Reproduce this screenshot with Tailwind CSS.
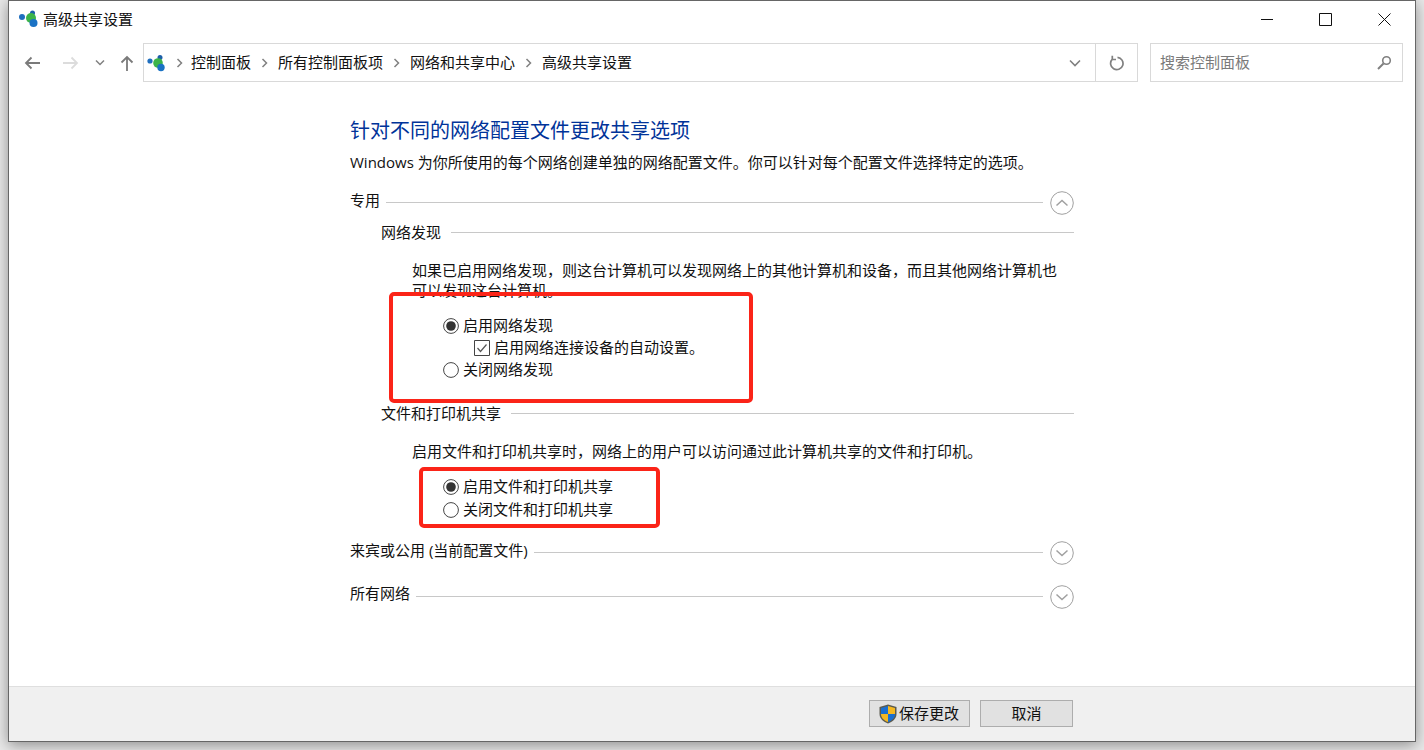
<!DOCTYPE html>
<html lang="zh-CN">
<head>
	<meta charset="UTF-8" />
	<title>高级共享设置</title>
	<script src="https://cdn.jsdelivr.net/npm/@tailwindcss/browser@4"></script>
</head>
<body class="bg-[#e9e9e9] h-[750px] overflow-hidden font-['Open_Sans','Noto_Sans_CJK_SC',sans-serif] text-[15px] leading-[20px] text-[#111]">
	<div class="relative ml-2 w-[1408px] h-[742px] flex flex-col bg-white border border-[#666] shadow-[0_3px_14px_rgba(0,0,0,0.4)]">

		<!-- title bar -->
		<div class="h-[36px] flex items-center shrink-0">
			<svg class="ml-[9px] w-[22px] h-[20px]" viewBox="0 0 22 20">
				<circle cx="4" cy="8" r="3" fill="#1f6fbf"/>
				<circle cx="14.5" cy="4" r="2.5" fill="#1c5fa8"/>
				<circle cx="13" cy="9" r="5" fill="#3cb44a"/>
				<circle cx="15.5" cy="14" r="4" fill="#1a72c4"/>
			</svg>
			<span class="ml-[3px]">高级共享设置</span>
			<div class="ml-auto mr-[24px] flex items-center gap-[46px]">
				<svg class="w-[12px] h-[12px]" viewBox="0 0 12 12"><path d="M0 6.5H12" stroke="#111" fill="none"/></svg>
				<svg class="w-[13px] h-[13px]" viewBox="0 0 13 13"><path d="M.5.5H12.5V12.5H.5Z" stroke="#111" fill="none"/></svg>
				<svg class="w-[13px] h-[13px]" viewBox="0 0 13 13"><path d="M.5.5L12.5 12.5M12.5.5L.5 12.5" stroke="#111" fill="none"/></svg>
			</div>
		</div>

		<!-- nav row -->
		<div class="mt-[6px] h-[39px] flex shrink-0">
			<div class="w-[134px] flex items-center">
				<svg class="ml-[15px] w-[17px] h-[14px]" viewBox="0 0 17 14"><path d="M16 7H2M7.5 1.5L2 7l5.5 5.500" stroke="#7a7a7a" stroke-width="1.800" fill="none"/></svg>
				<svg class="ml-[21px] w-[17px] h-[14px]" viewBox="0 0 17 14"><path d="M1 7H15M9.500 1.500L15 7l-5.500 5.500" stroke="#dcdcdc" stroke-width="1.800" fill="none"/></svg>
				<svg class="ml-[16px] w-[10px] h-[7px]" viewBox="0 0 10 7"><path d="M1 1.500L5 5.500L9 1.500" stroke="#808080" stroke-width="1.500" fill="none"/></svg>
				<svg class="ml-[15px] mt-[2px] w-[14px] h-[17px]" viewBox="0 0 14 17"><path d="M7 16V2M1.500 7.500L7 2l5.500 5.500" stroke="#7a7a7a" stroke-width="1.800" fill="none"/></svg>
			</div>
			<div class="w-[995px] flex items-center border border-[#d9d9d9]">
				<svg class="ml-[1px] w-[22px] h-[20px]" viewBox="0 0 22 20">
					<circle cx="5" cy="8" r="2.600" fill="#1f6fbf"/>
					<circle cx="15" cy="4.500" r="2.500" fill="#1c5fa8"/>
					<circle cx="13" cy="10" r="4.800" fill="#3cb44a"/>
					<circle cx="16" cy="14.500" r="3.700" fill="#1a72c4"/>
				</svg>
				<svg class="ml-[9px] w-[7px] h-[10px]" viewBox="0 0 7 10"><path d="M1.500 1L5.500 5L1.500 9" stroke="#808080" stroke-width="1.500" fill="none"/></svg>
				<span class="ml-[8px] mb-[2px]">控制面板</span>
				<svg class="ml-[10px] w-[7px] h-[10px]" viewBox="0 0 7 10"><path d="M1.500 1L5.500 5L1.500 9" stroke="#808080" stroke-width="1.500" fill="none"/></svg>
				<span class="ml-[10px] mb-[2px]">所有控制面板项</span>
				<svg class="ml-[10px] w-[7px] h-[10px]" viewBox="0 0 7 10"><path d="M1.500 1L5.500 5L1.500 9" stroke="#808080" stroke-width="1.500" fill="none"/></svg>
				<span class="ml-[10px] mb-[2px]">网络和共享中心</span>
				<svg class="ml-[10px] w-[7px] h-[10px]" viewBox="0 0 7 10"><path d="M1.500 1L5.500 5L1.500 9" stroke="#808080" stroke-width="1.500" fill="none"/></svg>
				<span class="ml-[10px] mb-[2px]">高级共享设置</span>
				<svg class="ml-auto mr-[14px] w-[12px] h-[8px]" viewBox="0 0 12 8"><path d="M1 1.500L6 6.500L11 1.500" stroke="#808080" stroke-width="1.600" fill="none"/></svg>
				<div class="w-[42px] h-full border-l border-[#d9d9d9] flex items-center justify-center">
					<svg class="w-[16px] h-[16px]" viewBox="0 0 16 16"><path d="M8.500 2.300A6.200 6.200 0 1 1 3.300 4.200M3.300 .8V4.500H7" stroke="#808080" stroke-width="1.700" fill="none"/></svg>
				</div>
			</div>
			<div class="ml-[12px] w-[253px] flex items-center justify-between border border-[#d9d9d9] pl-[9px] pr-[10px] text-[#7a7a7a]">
				<span class="mb-[2px]">搜索控制面板</span>
				<svg class="w-[15px] h-[15px]" viewBox="0 0 15 15"><circle cx="9.500" cy="5.500" r="3.800" stroke="#808080" stroke-width="1.600" fill="none"/><path d="M6.500 8.500L1 14" stroke="#808080" stroke-width="2" fill="none"/></svg>
			</div>
		</div>

		<!-- main -->
		<div class="flex-1 pl-[341px] pt-[34px]">
			<div class="w-[724px]">
				<h1 class="mt-[1px] text-[20px] leading-[28px] text-[#003399]">针对不同的网络配置文件更改共享选项</h1>
				<p class="mt-[7px]">Windows 为你所使用的每个网络创建单独的网络配置文件。你可以针对每个配置文件选择特定的选项。</p>

				<div class="mt-[19px] h-[24px] flex items-center">
					<span class="mb-[6px]">专用</span>
					<div class="ml-[6px] mb-[1px] flex-1 h-px bg-[#c8c8c8]"></div>
					<svg class="ml-[7px] w-[24px] h-[24px]" viewBox="0 0 24 24"><circle cx="12" cy="12" r="11.300" stroke="#a0a0a0" fill="white"/><path d="M6.500 14.500L12 9.500L17.500 14.500" stroke="#a0a0a0" stroke-width="1.500" fill="none"/></svg>
				</div>

				<div class="ml-[31px]">
					<div class="mt-[7px] flex items-center">
						<span>网络发现</span>
						<div class="ml-[10px] flex-1 h-px bg-[#c8c8c8]"></div>
					</div>
					<p class="mt-[18px] ml-[31px] w-[650px]">如果已启用网络发现，则这台计算机可以发现网络上的其他计算机和设备，而且其他网络计算机也可以发现这台计算机。</p>
					<div class="mt-[16px] ml-[62px] h-[20px] flex items-center">
						<svg class="w-[16px] h-[16px]" viewBox="0 0 16 16"><circle cx="8" cy="8" r="7.400" stroke="#444" fill="white"/><circle cx="8" cy="8" r="4.800" fill="#333"/></svg>
						<span class="ml-[4px] mb-[2px]">启用网络发现</span>
					</div>
					<div class="mt-[2px] ml-[93px] h-[20px] flex items-center">
						<svg class="w-[16px] h-[16px]" viewBox="0 0 16 16"><path d="M.5.5H15.500V15.500H.5Z" stroke="#444" fill="white"/><path d="M3.500 8L6.500 11.500L12.500 4.500" stroke="#555" stroke-width="1.200" fill="none"/></svg>
						<span class="ml-[4px] mb-[2px]">启用网络连接设备的自动设置。</span>
					</div>
					<div class="mt-[2px] ml-[62px] h-[20px] flex items-center">
						<svg class="w-[16px] h-[16px]" viewBox="0 0 16 16"><circle cx="8" cy="8" r="7.400" stroke="#444" fill="white"/></svg>
						<span class="ml-[4px] mb-[2px]">关闭网络发现</span>
					</div>

					<div class="mt-[23px] flex items-center">
						<span>文件和打印机共享</span>
						<div class="ml-[10px] flex-1 h-px bg-[#c8c8c8]"></div>
					</div>
					<p class="mt-[18px] ml-[31px]">启用文件和打印机共享时，网络上的用户可以访问通过此计算机共享的文件和打印机。</p>
					<div class="mt-[16px] ml-[62px] h-[20px] flex items-center">
						<svg class="w-[16px] h-[16px]" viewBox="0 0 16 16"><circle cx="8" cy="8" r="7.400" stroke="#444" fill="white"/><circle cx="8" cy="8" r="4.800" fill="#333"/></svg>
						<span class="ml-[4px] mb-[2px]">启用文件和打印机共享</span>
					</div>
					<div class="mt-[3px] ml-[62px] h-[20px] flex items-center">
						<svg class="w-[16px] h-[16px]" viewBox="0 0 16 16"><circle cx="8" cy="8" r="7.400" stroke="#444" fill="white"/></svg>
						<span class="ml-[4px] mb-[2px]">关闭文件和打印机共享</span>
					</div>
				</div>

				<div class="mt-[21px] h-[24px] flex items-center">
					<span class="mb-[6px]">来宾或公用 (当前配置文件)</span>
					<div class="ml-[6px] mb-[1px] flex-1 h-px bg-[#c8c8c8]"></div>
					<svg class="ml-[7px] w-[24px] h-[24px]" viewBox="0 0 24 24"><circle cx="12" cy="12" r="11.300" stroke="#a0a0a0" fill="white"/><path d="M6.500 9.500L12 14.500L17.500 9.500" stroke="#a0a0a0" stroke-width="1.500" fill="none"/></svg>
				</div>
				<div class="mt-[20px] h-[24px] flex items-center">
					<span class="mb-[8px]">所有网络</span>
					<div class="ml-[6px] mb-[1px] flex-1 h-px bg-[#c8c8c8]"></div>
					<svg class="ml-[7px] w-[24px] h-[24px]" viewBox="0 0 24 24"><circle cx="12" cy="12" r="11.300" stroke="#a0a0a0" fill="white"/><path d="M6.500 9.500L12 14.500L17.500 9.500" stroke="#a0a0a0" stroke-width="1.500" fill="none"/></svg>
				</div>
			</div>
		</div>

		<!-- footer -->
		<div class="h-[55px] shrink-0 bg-[#f0f0f0] border-t border-[#dfdfdf] flex items-start pt-[13px] pl-[860px]">
			<button class="w-[101px] h-[27px] bg-[#e1e1e1] border border-[#adadad] flex items-center pl-[9px]">
				<svg class="w-[18px] h-[20px]" viewBox="0 0 18 20">
					<path d="M9 .5L17.500 3V10C17.500 14.500 13.500 18 9 19.500C4.500 18 .5 14.500 .5 10V3Z" fill="#5a5a50"/>
					<path d="M9 2L9 10H2V4Z" fill="#1a6fd0"/>
					<path d="M9 2L16 4V10H9Z" fill="#f5b820"/>
					<path d="M2 10H9V18C5 16.500 2 14 2 10Z" fill="#f5b820"/>
					<path d="M9 10H16C16 14 13 16.500 9 18Z" fill="#1a6fd0"/>
				</svg>
				<span class="ml-[2px] mb-[2px]">保存更改</span>
			</button>
			<button class="ml-[10px] w-[93px] h-[27px] bg-[#e1e1e1] border border-[#adadad] pb-[2px]">取消</button>
		</div>

		<!-- red annotation boxes drawn over the dialog -->
		<div class="absolute left-[380px] top-[291px] w-[364px] h-[111px] border-[4px] border-[#fb2418] rounded-[5px]"></div>
		<div class="absolute left-[410px] top-[466px] w-[241px] h-[61px] border-[4px] border-[#fb2418] rounded-[5px]"></div>
	</div>
</body>
</html>
